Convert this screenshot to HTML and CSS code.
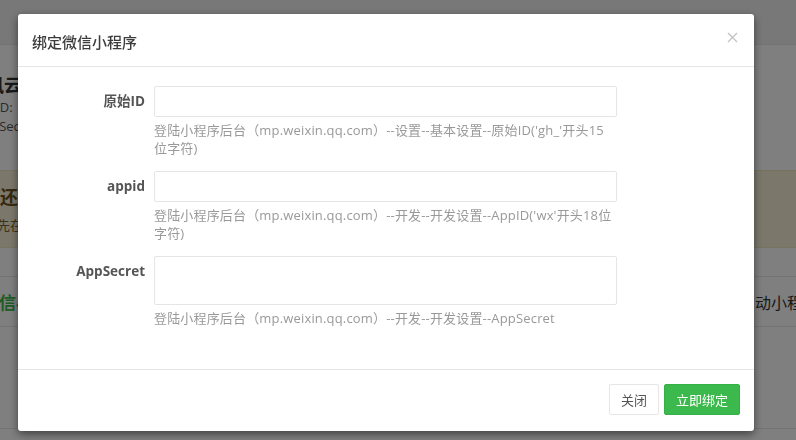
FILE: index.html
```html
<!DOCTYPE html>
<html lang="zh">
<head>
<meta charset="utf-8">
<title>绑定微信小程序</title>
<link rel="stylesheet" href="styles.css">
</head>
<body>
<div class="page">
  <div class="topbar"></div>
  <div class="panel">
    <div class="info">
      <div class="info-title">腾讯云</div>
      <div class="info-line line-id">AppID:</div>
      <div class="info-line line-sec">AppSecret:</div>
    </div>
    <div class="alert">
      <div class="alert-title">您还未绑定</div>
      <div class="alert-text">请先在此处绑定小程序</div>
    </div>
    <div class="row">
      <span class="row-left">微信小程序</span>
      <span class="row-right">启动小程序</span>
    </div>
    <div class="row-empty"></div>
  </div>
</div>
<div class="backdrop"></div>
<div class="modal">
  <div class="modal-header">
    <h4 class="modal-title">绑定微信小程序</h4>
    <button class="close" type="button" aria-label="关闭">
      <svg width="11" height="11" viewBox="0 0 11 11"><path d="M1 1L10 10M10 1L1 10" stroke="#c4c4c4" stroke-width="1.4" fill="none"/></svg>
    </button>
  </div>
  <div class="modal-body">
    <div class="form-group">
      <label class="label">原始ID</label>
      <div class="field">
        <input class="input" type="text">
        <p class="help">登陆小程序后台（mp.weixin.qq.com）--设置--基本设置--原始ID('gh_'开头15位字符)</p>
      </div>
    </div>
    <div class="form-group">
      <label class="label">appid</label>
      <div class="field">
        <input class="input" type="text">
        <p class="help">登陆小程序后台（mp.weixin.qq.com）--开发--开发设置--AppID('wx'开头18位字符)</p>
      </div>
    </div>
    <div class="form-group">
      <label class="label">AppSecret</label>
      <div class="field">
        <textarea class="input textarea"></textarea>
        <p class="help">登陆小程序后台（mp.weixin.qq.com）--开发--开发设置--AppSecret</p>
      </div>
    </div>
  </div>
  <div class="modal-footer">
    <button class="btn btn-default" type="button">关闭</button>
    <button class="btn btn-primary" type="button">立即绑定</button>
  </div>
</div>
</body>
</html>
```
FILE: styles.css
```css
* { box-sizing: border-box; }
html, body { margin: 0; padding: 0; }
body {
  width: 796px;
  height: 440px;
  overflow: hidden;
  background: #fff;
  font-family: "Open Sans", "Noto Sans CJK SC", sans-serif;
  font-size: 13px;
  color: #333;
}
.page { width: 796px; }
.topbar { height: 45px; background: #f1f1f1; border-bottom: 1px solid #e6e6e6; }
.panel { background: #fff; }
.info { padding: 28px 0 0 0; height: 125px; margin-left: -32px; }
.info-title { font-size: 18px; font-weight: bold; color: #333; line-height: 24px; white-space: nowrap; }
.info-line { font-size: 13px; line-height: 19px; color: #555; white-space: nowrap; }
.line-id { margin-top: 1px; margin-left: 4px; }
.line-sec { margin-left: 7px; }
.alert {
  height: 78px;
  background: #f6f1d6;
  border-top: 1px solid #efe6c0;
  border-bottom: 1px solid #efe6c0;
  padding: 14px 0 0 0;
}
.alert-title { font-size: 18px; font-weight: bold; color: #6b5220; line-height: 24px; margin-left: -18px; white-space: nowrap; }
.alert-text { font-size: 13px; color: #7a6533; line-height: 20px; margin-top: 6px; margin-left: -16px; white-space: nowrap; }
.row {
  margin-top: 28px;
  height: 51px;
  border-top: 1px solid #e6e6e6;
  border-bottom: 1px solid #e6e6e6;
  display: flex;
  align-items: center;
  justify-content: space-between;
  margin-right: -23px;
  margin-left: -18px;
}
.row-left { font-size: 17px; font-weight: bold; color: #3cb94c; white-space: nowrap; }
.row-right { font-size: 16px; color: #333; white-space: nowrap; }
.row-empty { height: 102px; border-bottom: 1px solid #e6e6e6; }

.backdrop { position: fixed; inset: 0; background: rgba(0,0,0,0.5); }

.modal {
  position: fixed;
  left: 18px;
  top: 14px;
  width: 736px;
  background: #fff;
  border-radius: 3px;
  box-shadow: 0 3px 9px rgba(0,0,0,0.5);
  display: flex;
  flex-direction: column;
}
.modal-header {
  height: 53px;
  border-bottom: 1px solid #e5e5e5;
  display: flex;
  align-items: center;
  justify-content: space-between;
  padding: 0 15px 0 14px;
}
.modal-title {
  margin: 0;
  font-family: "Noto Sans CJK SC", sans-serif;
  font-size: 15px;
  font-weight: 500;
  color: #3c3c3c;
  padding-top: 3px;
}
.close {
  border: 0;
  background: none;
  padding: 0;
  width: 11px;
  height: 11px;
  display: flex;
  margin-top: -6px;
  margin-right: 1px;
}
.modal-body { padding: 19px 0 28px 0; }
.form-group {
  display: grid;
  grid-template-columns: 127px 463px;
  column-gap: 9px;
  margin-bottom: 14px;
}
.label {
  text-align: right;
  font-weight: bold;
  font-size: 13.5px;
  color: #555;
  line-height: 20px;
  padding-top: 5px;
}
.input {
  display: block;
  width: 463px;
  height: 31px;
  margin: 0;
  border: 1px solid #e5e5e5;
  border-radius: 2px;
  background: #fff;
  font: inherit;
  padding: 5px 8px;
  outline: none;
}
.textarea { height: 49px; resize: none; }
.help {
  margin: 4px 0 0 0;
  color: #999;
  font-size: 13px;
  line-height: 18px;
  letter-spacing: 0.17px;
}
.modal-footer {
  border-top: 1px solid #e5e5e5;
  display: flex;
  justify-content: flex-end;
  gap: 5px;
  padding: 14px 14px 16px 0;
}
.btn {
  height: 31px;
  padding: 0 11px;
  font-family: "Open Sans", "Noto Sans CJK SC", sans-serif;
  font-size: 13px;
  border-radius: 2px;
  cursor: pointer;
}
.btn-default { background: #fff; border: 1px solid #e6e6e6; color: #555; }
.btn-primary { background: #3cb94c; border: 1px solid #36b046; color: #fff; width: 76px; }
```
